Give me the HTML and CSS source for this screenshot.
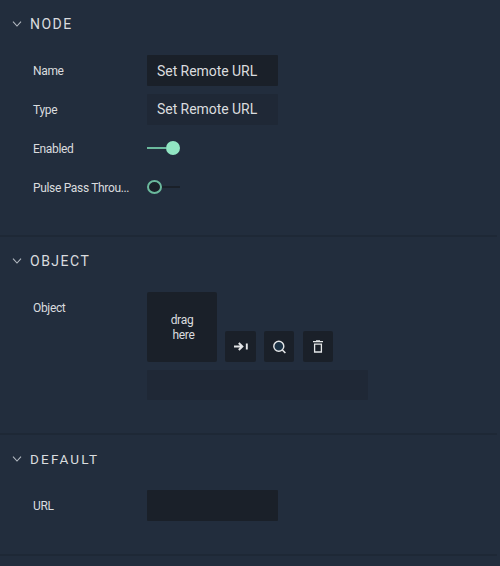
FILE: index.html
```html
<!DOCTYPE html>
<html lang="en">
<head>
<meta charset="utf-8">
<title>Node properties</title>
<link rel="stylesheet" href="styles.css">
</head>
<body>
<main class="panel">
  <section class="section section-node">
    <header class="section-header">
      <svg class="chevron" viewBox="0 0 10 8"><path d="M1 1.7 5 6 9 1.7"/></svg>
      <h2 class="title">NODE</h2>
    </header>
    <div class="rows">
      <div class="row"><span class="label">Name</span><div class="field">Set Remote URL</div></div>
      <div class="row"><span class="label">Type</span><div class="field readonly">Set Remote URL</div></div>
      <div class="row"><span class="label">Enabled</span><div class="toggle on"><span class="knob"></span><span class="track"></span></div></div>
      <div class="row"><span class="label">Pulse Pass Throu...</span><div class="toggle"><span class="knob"></span><span class="track"></span></div></div>
    </div>
  </section>
  <section class="section">
    <header class="section-header">
      <svg class="chevron" viewBox="0 0 10 8"><path d="M1 1.7 5 6 9 1.7"/></svg>
      <h2 class="title">OBJECT</h2>
    </header>
    <div class="rows">
      <div class="row">
        <span class="label">Object</span>
        <div class="object">
          <div class="object-tools">
            <div class="drop"><span>drag</span><span class="here">here</span></div>
            <div class="button"><svg viewBox="0 0 16 16"><path class="bold" d="M1 7.5h8M5.8 4 9.4 7.5 5.8 11M13.8 4.5v6"/></svg></div>
            <div class="button narrow"><svg viewBox="0 0 16 16"><circle class="lens" cx="7.8" cy="7.2" r="5"/><path class="mid" d="m11.4 11 3 3"/></svg></div>
            <div class="button narrow last"><svg viewBox="0 0 16 16"><path class="thin" d="M3 2.7h10M6 2h4M4.6 5.2h6.8v7.8H4.6z"/></svg></div>
          </div>
          <div class="field readonly wide"></div>
        </div>
      </div>
    </div>
  </section>
  <section class="section">
    <header class="section-header">
      <svg class="chevron" viewBox="0 0 10 8"><path d="M1 1.7 5 6 9 1.7"/></svg>
      <h2 class="title title-default">DEFAULT</h2>
    </header>
    <div class="rows">
      <div class="row"><span class="label">URL</span><div class="field"></div></div>
    </div>
  </section>
</main>
</body>
</html>
```

FILE: styles.css
```css
* { box-sizing: border-box; }
body {
  margin: 0;
  height: 566px;
  overflow: hidden;
  background: #222d3d;
  color: #dadcdf;
  font-family: Roboto, "Liberation Sans", sans-serif;
}
.panel { width: 497px; }
.section {
  padding-bottom: 33px;
  border-bottom: 2px solid #1e2836;
}
.section-node { padding-bottom: 32px; }
.section-header {
  display: flex;
  align-items: center;
  height: 48px;
  padding-left: 12px;
  gap: 8px;
}
.chevron {
  width: 10px;
  height: 8px;
  fill: none;
  stroke: #b4bac2;
  stroke-width: 1.1;
}
.title {
  margin: 0;
  font-size: 14px;
  line-height: 20px;
  font-weight: 400;
  letter-spacing: 1.5px;
}
.title-default { font-size: 13.5px; letter-spacing: 2.2px; }
.rows {
  display: flex;
  flex-direction: column;
  gap: 8px;
  padding: 7px 0 0 33px;
}
.row { display: flex; align-items: flex-start; }
.label {
  width: 114px;
  height: 31px;
  flex: none;
  font-size: 12px;
  line-height: 33px;
  letter-spacing: -0.33px;
  white-space: nowrap;
}
.field {
  width: 131px;
  height: 31px;
  padding-left: 10px;
  border-radius: 1px;
  background: #1a2029;
  font-size: 14px;
  line-height: 32px;
  letter-spacing: -0.05px;
  white-space: nowrap;
}
.readonly { background: #1f2836; line-height: 31px; }
.wide { width: 221px; height: 30px; }
.toggle {
  display: flex;
  align-items: center;
  width: 33px;
  height: 30px;
}
.knob {
  width: 15px;
  height: 14px;
  border: 2px solid #6bb99d;
  border-radius: 50%;
  background: #1a2029;
}
.track { flex: 1; height: 2px; background: #1a2029; }
.on { flex-direction: row-reverse; }
.on .knob { width: 14px; height: 14px; border-color: #91e5c3; background: #91e5c3; }
.on .track { background: #6bb99d; }
.object { display: flex; flex-direction: column; gap: 8px; }
.object-tools { display: flex; align-items: flex-end; gap: 8px; }
.drop {
  display: flex;
  flex-direction: column;
  align-items: center;
  justify-content: center;
  width: 70px;
  height: 70px;
  padding-top: 2px;
  border-radius: 2px;
  background: #1a2029;
  font-size: 12px;
  line-height: 15px;
  letter-spacing: -0.3px;
}
.here { padding-left: 3px; }
.button {
  display: flex;
  align-items: center;
  justify-content: center;
  width: 31px;
  height: 31px;
  border-radius: 2px;
  background: #1a2029;
}
.narrow { width: 30px; }
.last { margin-left: 1px; }
.button svg { width: 16px; height: 16px; fill: none; stroke: #e4e6e8; }
.button .bold { stroke-width: 1.9; }
.button .mid { stroke-width: 1.6; }
.button .thin { stroke-width: 1.3; }
.button .lens { stroke-width: 1.4; fill: #1b3144; }
```
